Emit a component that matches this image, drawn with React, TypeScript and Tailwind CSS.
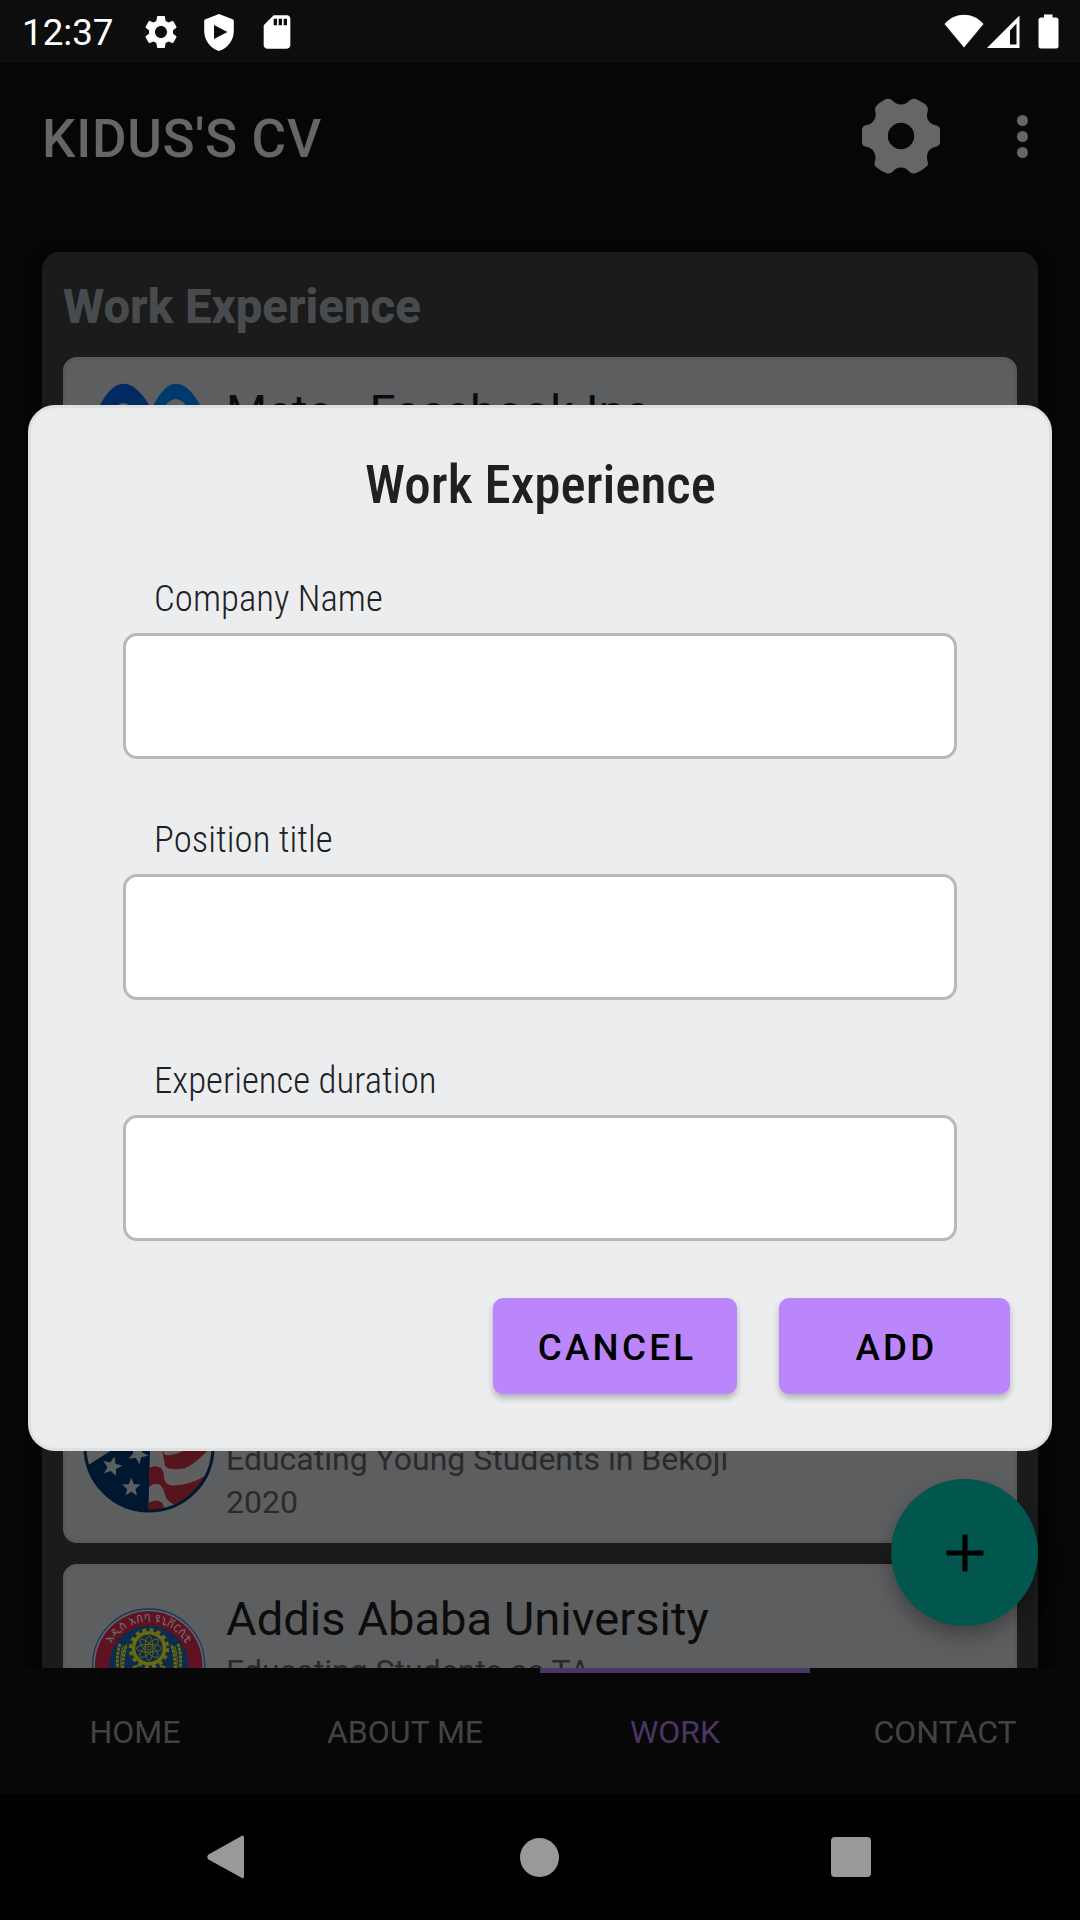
import type { ReactNode } from 'react';
import { MdSdCard, MdSettings } from 'react-icons/md';

function ShieldPlay() {
  return (
    <svg width="30" height="37" viewBox="0 0 30 37" className="block">
      <path
        fill="#fff"
        fillRule="evenodd"
        d="M15 0 L28.6 5.2 Q29.8 5.7 29.8 7 V17 C29.8 26 24 34 15 37 C6 34 0.2 26 0.2 17 V7 Q0.2 5.7 1.4 5.2 Z M10 11 V25 L23.5 18 Z"
      />
    </svg>
  );
}

function StatusBar() {
  return (
    <div className="flex h-[63px] shrink-0 items-center bg-[#0d0d0d] pl-[22px] pr-[21px] text-white">
      <span className="w-[119px] pt-[3px] text-[36.75px] leading-[64px]">12:37</span>
      <MdSettings className="size-10" />
      <div className="ml-[23px] pt-[2px]">
        <ShieldPlay />
      </div>
      <MdSdCard className="ml-[23px] size-10" />
      <svg className="ml-auto block" width="115" height="36" viewBox="0 0 115 36" fill="#fff">
        <path d="M0.500 10 C11.500 -2.300 28.500 -2.300 39.500 10 L20 33.500 Z" />
        <path fillRule="evenodd" d="M43 34 L75.500 1.500 V34 Z M66 16.500 V30.500 H72.500 V9.500 Z" />
        <path d="M100 0.500 H108.500 V3.500 H112 Q114.500 3.500 114.500 6 V32 Q114.500 34.500 112 34.500 H97 Q94.500 34.500 94.500 32 V6 Q94.500 3.500 97 3.500 H100 Z" />
      </svg>
    </div>
  );
}

function BigGear() {
  return (
    <svg width="80" height="78" viewBox="-40 -39 80 78" fill="#666" className="block">
      <path
        fillRule="evenodd"
        d="M39 -7 V7 Q38.500 10 35.500 10.800 L32 11.500 Q25 15 26 23 L27 27 Q27.500 29 25 31 Q20 35 15 37 Q11 38.500 8 35.500 Q5 31.500 0 31.500 Q-5 31.500 -8 35.500 Q-11 38.500 -15 37 Q-20 35 -25 31 Q-27.500 29 -26.500 27 L-25.500 23 Q-25 15 -32 11.500 L-35.500 10.500 Q-38.500 10 -39 7 V-7 Q-38.500 -10 -35.500 -10.800 L-32 -11.500 Q-25 -15 -25.200 -22 L-26 -26 Q-26 -29.500 -23 -32 Q-19 -35 -15 -37 Q-11 -38 -8.500 -35.500 Q-5 -31.500 0 -31.500 Q5 -31.500 8.500 -35.500 Q11 -38 15 -37 Q19 -35 24 -32 Q27 -29.500 27 -26 L26 -22 Q25 -15 32 -11.500 L35.500 -10.500 Q38.500 -10 39 -7 Z M13.200 0 A13.200 13.200 0 1 0 -13.200 0 A13.200 13.200 0 1 0 13.200 0 Z"
      />
    </svg>
  );
}

function AppBar() {
  return (
    <header className="flex h-[147px] shrink-0 items-center pl-[42px] pr-[52px]">
      <h1 className="pt-1 text-[53px] font-medium leading-[62px] tracking-[0.7px] text-[#666]">KIDUS'S CV</h1>
      <div className="ml-auto pb-[2px]">
        <BigGear />
      </div>
      <div className="ml-[76px] flex flex-col gap-[5px]">
        <span className="size-[11px] rounded-full bg-[#666]" />
        <span className="size-[11px] rounded-full bg-[#666]" />
        <span className="size-[11px] rounded-full bg-[#666]" />
      </div>
    </header>
  );
}

function MetaLogo() {
  return (
    <svg width="134" height="150" viewBox="0 0 134 150" className="block">
      <path
        fill="#002a61"
        fillRule="evenodd"
        d="M4 70 C4 50 10 38 18 28 C25 15 33 6.700 41.500 6.700 C50 6.700 59 14 67 28 C66 60 50 95 30 95 C12 95 4 85 4 70 Z M36 28 Q41.500 24 47 28 L50 60 L30 75 Z"
      />
      <path
        fill="#003a6d"
        fillRule="evenodd"
        d="M71.500 28 C79 14 86 6.700 94 6.700 C103 6.700 111 15 118 28 C130 50 132 95 110 95 C90 95 74 60 71.500 28 Z M83 29 Q93 15.500 104 28 L110 70 Z"
      />
    </svg>
  );
}

const STAR = 'M0 -9 L2.400 -3 L8.600 -2.800 L3.800 1.300 L5.300 7.300 L0 4 L-5.300 7.300 L-3.800 1.300 L-8.600 -2.800 L-2.400 -3 Z';

function FlagLogo() {
  return (
    <svg width="134" height="150" viewBox="0 0 134 150" className="block">
      <defs>
        <clipPath id="flag-disc">
          <circle cx="67" cy="75" r="65" />
        </clipPath>
      </defs>
      <g clipPath="url(#flag-disc)">
        <rect width="134" height="150" fill="#5f5f60" />
        <path fill="#00182f" d="M0 97 L8 92 L29.700 78 L68 60 V79 L66.300 141 H0 Z" />
        <g fill="#5c5f61">
          <path d={STAR} transform="translate(30 94.500) rotate(14) scale(1.150)" />
          <path d={STAR} transform="translate(49.300 115.500) scale(1.080)" />
          <path d={STAR} transform="translate(56 82) rotate(28) scale(1.150)" />
        </g>
        <g fill="#56151d">
          <path d="M80 78 L83 83 Q92 84 103 78 H126 Q112 93 102 96.500 Q88 99 83 94 L82 88 Z" />
          <path d="M67 96 Q73 92.500 79 96 Q82 99 82 106 Q83 113 90 113.500 Q106 114 125 103 Q118 122 92 132.500 Q84 129 82.500 121 Q81 114 76 112 Q71 111 67 115 Z" />
          <path d="M66 131 Q74 126.500 79 130 Q81 131 82.500 137 L66 142 Z" />
        </g>
      </g>
      <circle cx="67" cy="75" r="64" fill="none" stroke="#00182f" strokeWidth="3" />
    </svg>
  );
}

function SealLogo() {
  return (
    <svg width="134" height="150" viewBox="0 0 134 150" className="block">
      <defs>
        <path id="seal-arc" d="M23.700 81 A43 43 0 0 1 109.700 81" />
      </defs>
      <circle cx="66.700" cy="81" r="56" fill="#5f6265" stroke="#123a5c" strokeWidth="1.300" />
      <circle cx="66.700" cy="81" r="53.700" fill="#5f1322" />
      <circle cx="66.700" cy="81" r="39.500" fill="#0d2b4c" />
      <text fill="#747070" fontSize="11" fontFamily="'Noto Sans Ethiopic', 'Noto Sans', 'DejaVu Sans', sans-serif">
        <textPath href="#seal-arc" startOffset="50%" textAnchor="middle" textLength="90">
          አዲስ አበባ ዩኒቨርሲቲ
        </textPath>
      </text>
      <g fill="none" stroke="#6a690d">
        <circle cx="67" cy="64.300" r="18.600" strokeWidth="3.200" strokeDasharray="3.900 3.405" />
        <circle cx="67" cy="64.300" r="15.500" strokeWidth="3.600" />
        <g strokeWidth="0.900">
          <ellipse cx="67" cy="64.300" rx="4" ry="12.500" />
          <ellipse cx="67" cy="64.300" rx="4" ry="12.500" transform="rotate(45 67 64.300)" />
          <ellipse cx="67" cy="64.300" rx="4" ry="12.500" transform="rotate(90 67 64.300)" />
          <ellipse cx="67" cy="64.300" rx="4" ry="12.500" transform="rotate(135 67 64.300)" />
          <circle cx="67" cy="64.300" r="2" />
        </g>
        <g strokeWidth="3" strokeDasharray="3 1">
          <path d="M38 60 Q34 72 36 88" />
          <path d="M44 62 Q40 74 41 88" />
          <path d="M96 60 Q100 72 98 88" />
          <path d="M90 62 Q94 74 93 88" />
        </g>
        <g strokeWidth="1">
          <path d="M45 60 L40 70 M89 60 L94 70 M41 62 Q37 76 40 90 M93 62 Q97 76 94 90" />
        </g>
        <path strokeWidth="2" d="M51 84 Q52 82 56 82 M78 82 Q82 82 83 84" />
      </g>
    </svg>
  );
}

function JobCard({ logo, title, lines, className }: { logo: ReactNode; title: string; lines: string[]; className: string }) {
  return (
    <article
      className={`flex shrink-0 items-start rounded-[14px] border-[3px] border-[#5a5a5a] bg-[#5d5e60] pl-4 ${className}`}
    >
      <div className="mt-[17px] w-[144px] shrink-0">{logo}</div>
      <div className="pt-6">
        <h3 className="mb-[3px] text-[47.1px] leading-[56px] text-[#0c0c0c]">{title}</h3>
        {lines.map((line) => (
          <p key={line} className="text-[32px] leading-[43px] text-[#2a2a2a]">
            {line}
          </p>
        ))}
      </div>
    </article>
  );
}

function Field({ label }: { label: string }) {
  return (
    <label className="block">
      <span className="block pl-[31px] text-[36.75px] font-light leading-[48px] tracking-[0.05px] text-[#202124]">{label}</span>
      <input className="mt-[10px] block h-[126px] w-full rounded-[14px] border-[3px] border-[#b9b9b9] bg-white px-6 outline-none" />
    </label>
  );
}

const BUTTON =
  'h-24 rounded-[10px] bg-[#bb86fc] pl-1 pt-[3px] text-[36.75px] font-medium leading-[93px] tracking-[0.0893em] text-black shadow-[0_4px_6px_rgba(0,0,0,0.25)]';

function Dialog() {
  return (
    <div className="absolute left-7 top-[405px] h-[1046px] w-[1024px] rounded-[27px] border-[3px] border-[#e0e0e0] bg-[#ecedef]">
      <h2 className="pl-px pt-[45px] text-center font-['Roboto_Condensed',Roboto,sans-serif] text-[53px] font-medium leading-[64px] text-[#202020]">
        Work Experience
      </h2>
      <div className="mt-[58px] flex flex-col gap-[57px] px-[92px] font-['Roboto_Condensed',Roboto,sans-serif]">
        <Field label="Company Name" />
        <Field label="Position title" />
        <Field label="Experience duration" />
      </div>
      <div className="mt-[57px] flex justify-end gap-[42px] pr-[39px]">
        <button className={`w-[244px] ${BUTTON}`}>CANCEL</button>
        <button className={`w-[231px] ${BUTTON}`}>ADD</button>
      </div>
    </div>
  );
}

const TABS = ['HOME', 'ABOUT ME', 'WORK', 'CONTACT'];

function TabBar() {
  return (
    <nav className="grid h-[126px] shrink-0 grid-cols-4 bg-[#070707]">
      {TABS.map((tab) => (
        <div
          key={tab}
          className={`flex items-center justify-center border-t-[5px] pb-1 text-[32px] ${
            tab === 'WORK' ? 'border-t-[#4b3565] text-[#4b3565]' : 'border-t-transparent text-[#434343]'
          }`}
        >
          {tab}
        </div>
      ))}
    </nav>
  );
}

function SystemNav() {
  return (
    <div className="flex h-[126px] shrink-0 items-center justify-between bg-black pl-[206px] pr-[209px]">
      <svg width="38" height="44" viewBox="0 0 38 44" className="block">
        <path fill="#999" d="M36 0.800 Q38 0 38 2.500 V41.500 Q38 44 36 43 L2.500 24.500 Q0 22 2.500 19.500 Z" />
      </svg>
      <span className="ml-1 size-[39px] rounded-full bg-[#999]" />
      <span className="size-10 rounded bg-[#999]" />
    </div>
  );
}

export default function App() {
  return (
    <div className="relative flex h-[1920px] w-[1080px] flex-col overflow-hidden bg-[#060606] font-[Roboto,sans-serif]">
      <StatusBar />
      <AppBar />
      <main className="min-h-0 flex-1 overflow-hidden px-[42px] pt-[42px]">
        <section className="flex h-[1500px] flex-col gap-[21px] rounded-t-[18px] bg-[#1b1b1b] px-[21px] shadow-[0_8px_16px_#030303]">
          <h2 className="mb-px pt-[27px] text-[47.25px] font-extrabold leading-[56px] text-[#484b4e]">Work Experience</h2>
          <JobCard className="h-[974px]" logo={<MetaLogo />} title="Meta - Facebook Inc." lines={[]} />
          <JobCard
            className="h-[191px]"
            logo={<FlagLogo />}
            title="Peace Corps"
            lines={['Educating Young Students in Bekoji', '2020']}
          />
          <JobCard
            className="h-[191px]"
            logo={<SealLogo />}
            title="Addis Ababa University"
            lines={['Educating Students as TA']}
          />
        </section>
      </main>
      <TabBar />
      <SystemNav />
      <button className="absolute left-[891px] top-[1479px] flex size-[147px] items-center justify-center rounded-full bg-[#01564e] shadow-[0_10px_20px_rgba(0,0,0,0.3)]">
        <svg width="38" height="38" viewBox="0 0 38 38" className="block">
          <path d="M19 0.500 V37.500 M0.500 19 H37.500" stroke="#000" strokeWidth="5" />
        </svg>
      </button>
      <Dialog />
    </div>
  );
}
